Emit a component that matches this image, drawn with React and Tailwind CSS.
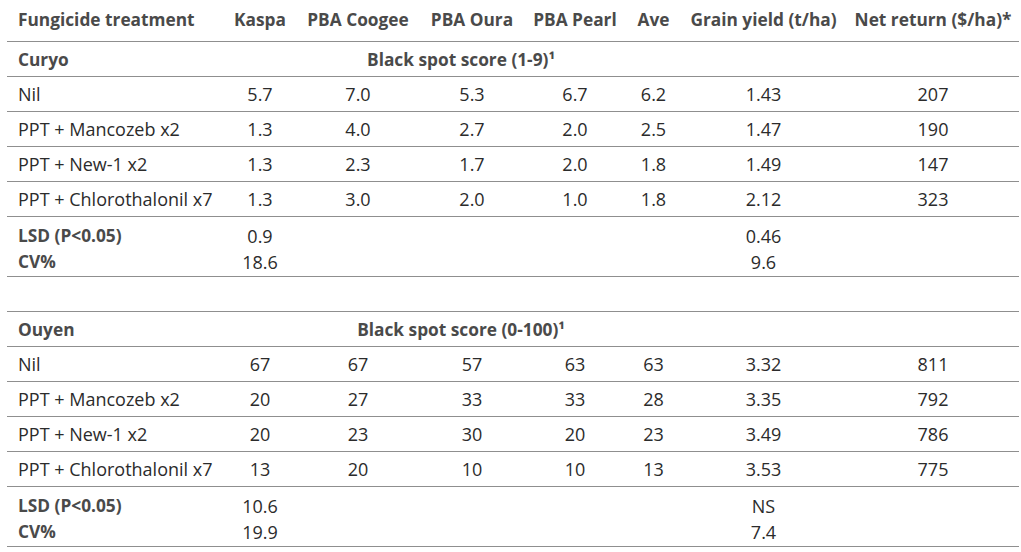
import React from "react";

const sites = [
  {
    name: "Curyo",
    scale: "Black spot score (1-9)¹",
    rows: [
      ["Nil", "5.7", "7.0", "5.3", "6.7", "6.2", "1.43", "207"],
      ["PPT + Mancozeb x2", "1.3", "4.0", "2.7", "2.0", "2.5", "1.47", "190"],
      ["PPT + New-1 x2", "1.3", "2.3", "1.7", "2.0", "1.8", "1.49", "147"],
      ["PPT + Chlorothalonil x7", "1.3", "3.0", "2.0", "1.0", "1.8", "2.12", "323"],
    ],
    lsd: ["0.9", "0.46"],
    cv: ["18.6", "9.6"],
  },
  {
    name: "Ouyen",
    scale: "Black spot score (0-100)¹",
    rows: [
      ["Nil", "67", "67", "57", "63", "63", "3.32", "811"],
      ["PPT + Mancozeb x2", "20", "27", "33", "33", "28", "3.35", "792"],
      ["PPT + New-1 x2", "20", "23", "30", "20", "23", "3.49", "786"],
      ["PPT + Chlorothalonil x7", "13", "20", "10", "10", "13", "3.53", "775"],
    ],
    lsd: ["10.6", "NS"],
    cv: ["19.9", "7.4"],
  },
];

const headers = ["Kaspa", "PBA Coogee", "PBA Oura", "PBA Pearl", "Ave", "Grain yield (t/ha)", "Net return ($/ha)*"];
const line = "border-b-[1.5px] border-[#8f8f8f]";
const bold = "font-bold text-[#4a4a4a] text-[17.3px]";

const SiteBlock = ({ site }) => (
  <>
    <tr className={`h-[35px] ${line}`}>
      <td className={`pl-[11px] pt-[3px] ${bold}`}>{site.name}</td>
      <td />
      <td colSpan={3} className={`text-center pt-[3px] whitespace-nowrap ${bold}`}>{site.scale}</td>
      <td colSpan={3} />
    </tr>
    {site.rows.map((r) => (
      <tr key={r[0]} className={`h-[35px] ${line}`}>
        <td className="pl-[11px] pt-[2px] whitespace-nowrap">{r[0]}</td>
        {r.slice(1).map((v, i) => (
          <td key={i} className="pt-[2px] text-center">{v}</td>
        ))}
      </tr>
    ))}
    <tr>
      <td className={`pl-[11px] pt-[6px] leading-[26px] ${bold}`}>LSD (P&lt;0.05)</td>
      <td className="pt-[6px] leading-[26px] text-center">{site.lsd[0]}</td>
      <td colSpan={4} />
      <td className="pt-[6px] leading-[26px] text-center">{site.lsd[1]}</td>
      <td />
    </tr>
    <tr className={line}>
      <td className={`pl-[11px] pb-[1px] leading-[26px] ${bold}`}>CV%</td>
      <td className="pb-[1px] leading-[26px] text-center">{site.cv[0]}</td>
      <td colSpan={4} />
      <td className="pb-[1px] leading-[26px] text-center">{site.cv[1]}</td>
      <td />
    </tr>
  </>
);

export default function App() {
  return (
    <div className="w-[1021px] h-[552px] bg-white pl-[7px] text-[18px] text-[#2b2b2b]" style={{ fontFamily: '"Open Sans", "Noto Sans", sans-serif' }}>
      <table className="table-fixed border-collapse w-[1012px]">
        <colgroup>
          <col className="w-[218px]" />
          <col className="w-[70px]" />
          <col className="w-[126px]" />
          <col className="w-[102px]" />
          <col className="w-[104px]" />
          <col className="w-[53px]" />
          <col className="w-[167px]" />
          <col className="w-[172px]" />
        </colgroup>
        <thead>
          <tr className={`h-[41px] ${line}`}>
            <th className={`pl-[11px] text-left whitespace-nowrap ${bold}`}>Fungicide treatment</th>
            {headers.map((h) => (
              <th key={h} className={`text-center whitespace-nowrap ${bold}`}>{h}</th>
            ))}
          </tr>
        </thead>
        <tbody>
          <SiteBlock site={sites[0]} />
          <tr className={`h-[35px] ${line}`}>
            <td colSpan={8} />
          </tr>
          <SiteBlock site={sites[1]} />
        </tbody>
      </table>
    </div>
  );
}
